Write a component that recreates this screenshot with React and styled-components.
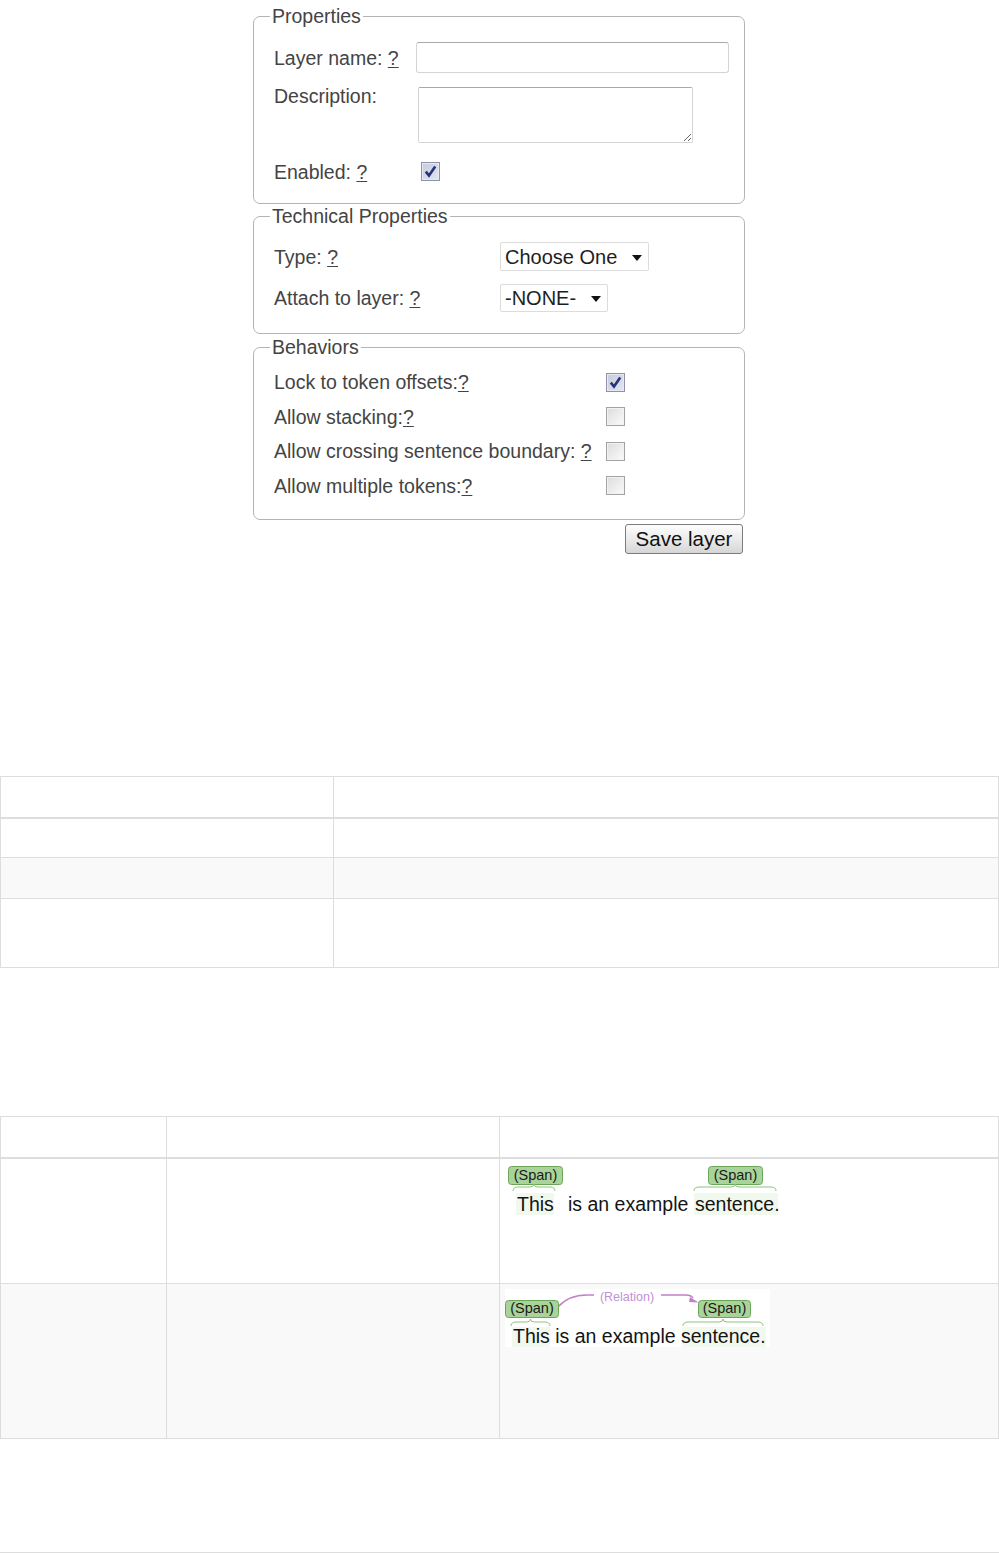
import React from "react";
import styled, { createGlobalStyle } from "styled-components";

const GlobalStyle = createGlobalStyle`
  body {
    margin: 0;
    background: #fff;
    font-family: "Liberation Sans", Arial, sans-serif;
  }
`;

const Page = styled.div`
  display: flex;
  flex-direction: column;
`;

const LayerForm = styled.form`
  width: 492px;
  margin: 5px 0 0 253px;
  display: flex;
  flex-direction: column;
  color: #444;
  font-size: 19.5px;
  line-height: 22px;
`;

const Group = styled.fieldset`
  margin: ${(p) => p.$top || 0}px 0 0;
  padding: ${(p) => p.$pad};
  border: 1px solid #b4b4b4;
  border-radius: 7px;
  min-width: 0;
`;

const Legend = styled.legend`
  padding: 0 2px;
  line-height: 22px;
`;

const Row = styled.div`
  display: grid;
  grid-template-columns: ${(p) => p.$label}px auto;
  align-items: ${(p) => p.$align || "center"};
  justify-items: start;
  margin-top: ${(p) => p.$gap || 0}px;
  padding-left: 4px;
  height: ${(p) => (p.$h ? `${p.$h}px` : "auto")};
`;

const Label = styled.span`
  margin-top: ${(p) => p.$shift || 0}px;
  white-space: nowrap;
`;

const Help = styled.span`
  text-decoration: underline;
  text-underline-offset: 2px;
`;

const TextInput = styled.input`
  box-sizing: border-box;
  width: 313px;
  height: 31px;
  margin: 0;
  border: 1px solid #d4d4d4;
  border-top-color: #aaa;
  border-radius: 3px;
  background: #fff;
`;

const TextArea = styled.textarea`
  box-sizing: border-box;
  width: 275px;
  height: 56px;
  margin: 0 0 0 2px;
  border: 1px solid #d4d4d4;
  border-top-color: #aaa;
  border-radius: 2px;
  background: #fff;
  display: block;
`;

const SelectBox = styled.div`
  box-sizing: border-box;
  display: inline-flex;
  align-items: center;
  gap: 15px;
  height: ${(p) => p.$h}px;
  padding: 0 6px 0 4px;
  border: 1px solid #dcdcdc;
  border-radius: 2px;
  background: #fff;
  color: #1e1e1e;
  font-size: 20px;
`;

const Caret = styled.span`
  width: 0;
  height: 0;
  margin-top: 2px;
  border-left: 5px solid transparent;
  border-right: 5px solid transparent;
  border-top: 6px solid #111;
`;

const Box = styled.span`
  box-sizing: border-box;
  display: inline-flex;
  align-items: center;
  justify-content: center;
  width: 19px;
  height: 19px;
  margin-left: ${(p) => p.$indent || 0}px;
  border: 1px solid ${(p) => (p.$checked ? "#8e94a6" : "#a3a3a3")};
  box-shadow: inset 0 0 0 1px ${(p) => (p.$checked ? "#e7e9f2" : "#f2f2f2")};
  background: ${(p) =>
    p.$checked
      ? "linear-gradient(135deg, #c6cbde, #e2e5f0)"
      : "linear-gradient(135deg, #dcdcdc, #fbfbfb)"};
`;

const ButtonBar = styled.div`
  display: flex;
  justify-content: flex-end;
  margin-top: 4px;
  padding-right: 2px;
`;

const SaveButton = styled.button`
  box-sizing: border-box;
  width: 118px;
  height: 30px;
  padding: 0;
  border: 1px solid #7b7b7b;
  border-radius: 3px;
  background: linear-gradient(#fdfdfd, #e9e9e9 55%, #d6d6d6);
  color: #111;
  font-family: "Liberation Sans", Arial, sans-serif;
  font-size: 20.5px;
`;

const DataTable = styled.table`
  width: 100%;
  border-collapse: collapse;
  table-layout: fixed;
  margin-top: ${(p) => p.$top}px;

  th,
  td {
    border: 1px solid #ddd;
    padding: 5px;
    vertical-align: top;
  }

  thead th {
    border-bottom: 2px solid #ddd;
  }

  tbody tr:nth-child(even) {
    background: #f9f9f9;
  }
`;

const Col = styled.col`
  width: ${(p) => p.$w};
`;

const Tr = styled.tr`
  height: ${(p) => p.$h}px;
`;

const Figure = styled.svg`
  display: block;
  font-family: "Liberation Sans", Arial, sans-serif;
`;

const Rule = styled.div`
  margin-top: 113px;
  border-top: 1px solid #ddd;
`;

const Checkbox = ({ checked, indent }) => (
  <Box $checked={checked} $indent={indent}>
    {checked && (
      <svg width="15" height="15" viewBox="0 0 15 15">
        <path d="M2.8 7.6 L6 11.6 L12.2 2.6" fill="none" stroke="#26357a" strokeWidth="2.6" />
      </svg>
    )}
  </Box>
);

const brace = (x1, x2, y) => {
  const m = (x1 + x2) / 2;
  return `M${x1},${y + 4} Q${x1},${y} ${x1 + 5},${y} L${m - 4},${y} Q${m},${y} ${m},${y - 3} Q${m},${y} ${m + 4},${y} L${x2 - 5},${y} Q${x2},${y} ${x2},${y + 4}`;
};

const SpanTag = ({ x, y, w, h }) => (
  <g>
    <rect x={x + 0.5} y={y + 0.5} width={w} height={h} rx="3" fill="#a9d398" stroke="#6aa659" />
    <text x={x + w / 2 + 0.5} y={y + h - 4} fontSize="14.5" fill="#1a1a1a" textAnchor="middle">
      (Span)
    </text>
  </g>
);

const SpanExample = () => (
  <Figure width="280" height="56">
    <rect x="11" y="29" width="38" height="22" fill="#f1f8ee" />
    <rect x="189" y="29" width="84" height="22" fill="#f1f8ee" />
    <SpanTag x={3} y={2} w={54} h={18} />
    <SpanTag x={203} y={2} w={54} h={18} />
    <path d={brace(8, 50, 23)} fill="none" stroke="#8cc47a" />
    <path d={brace(189, 271, 23)} fill="none" stroke="#8cc47a" />
    <g fontSize="19.5" fill="#141414">
      <text x="12" y="47">This</text>
      <text x="63" y="47">is an example</text>
      <text x="190" y="47">sentence.</text>
    </g>
  </Figure>
);

const RelationExample = () => (
  <Figure width="265" height="58">
    <rect width="265" height="58" fill="#fff" />
    <rect x="7" y="38" width="38" height="20" fill="#f1f8ee" />
    <rect x="177" y="38" width="84" height="20" fill="#f1f8ee" />
    <path d="M53,18 C60,10 70,6 82,6 L89,6" fill="none" stroke="#c47fcb" strokeWidth="1.3" />
    <text x="122" y="11.5" fontSize="12.5" fill="#c192d2" textAnchor="middle">
      (Relation)
    </text>
    <path d="M156,6 L181,6 Q186,6 188,9" fill="none" stroke="#c47fcb" strokeWidth="1.3" />
    <polygon points="185,8 193.5,13.5 184,13" fill="#c47fcb" />
    <SpanTag x={0} y={11} w={53} h={17} />
    <SpanTag x={193} y={11} w={52} h={17} />
    <path d={brace(6, 45, 33)} fill="none" stroke="#8cc47a" />
    <path d={brace(178, 258, 33)} fill="none" stroke="#8cc47a" />
    <text x="8" y="54" fontSize="19.5" fill="#141414">
      This is an example sentence.
    </text>
  </Figure>
);

const behaviors = [
  { text: "Lock to token offsets:", space: false, checked: true },
  { text: "Allow stacking:", space: false, checked: false },
  { text: "Allow crossing sentence boundary:", space: true, checked: false },
  { text: "Allow multiple tokens:", space: false, checked: false },
];

export default function App() {
  return (
    <Page>
      <GlobalStyle />
      <LayerForm onSubmit={(e) => e.preventDefault()}>
        <Group $pad="15px 16px 20.5px">
          <Legend>Properties</Legend>
          <Row $label={142} $h={31}>
            <Label>
              Layer name: <Help>?</Help>
            </Label>
            <TextInput type="text" />
          </Row>
          <Row $label={142} $gap={14} $align="start">
            <Label $shift={-2}>Description:</Label>
            <TextArea />
          </Row>
          <Row $label={142} $gap={17.5} $h={22}>
            <Label>
              Enabled: <Help>?</Help>
            </Label>
            <Checkbox checked indent={5} />
          </Row>
        </Group>

        <Group $top={1} $pad="15px 16px 21px">
          <Legend>Technical Properties</Legend>
          <Row $label={226} $h={29}>
            <Label>
              Type: <Help>?</Help>
            </Label>
            <SelectBox $h={29}>
              Choose One <Caret />
            </SelectBox>
          </Row>
          <Row $label={226} $gap={13} $h={28}>
            <Label>
              Attach to layer: <Help>?</Help>
            </Label>
            <SelectBox $h={28}>
              -NONE- <Caret />
            </SelectBox>
          </Row>
        </Group>

        <Group $top={2} $pad="7px 16px 16px">
          <Legend>Behaviors</Legend>
          {behaviors.map((b) => (
            <Row key={b.text} $label={332} $h={34.5}>
              <Label>
                {b.text}
                {b.space ? " " : ""}
                <Help>?</Help>
              </Label>
              <Checkbox checked={b.checked} />
            </Row>
          ))}
        </Group>

        <ButtonBar>
          <SaveButton type="submit">Save layer</SaveButton>
        </ButtonBar>
      </LayerForm>

      <DataTable $top={222}>
        <colgroup>
          <Col $w="33.33%" />
          <Col $w="66.67%" />
        </colgroup>
        <thead>
          <Tr $h={41}>
            <th />
            <th />
          </Tr>
        </thead>
        <tbody>
          <Tr $h={40}>
            <td />
            <td />
          </Tr>
          <Tr $h={41}>
            <td />
            <td />
          </Tr>
          <Tr $h={69}>
            <td />
            <td />
          </Tr>
        </tbody>
      </DataTable>

      <DataTable $top={148}>
        <colgroup>
          <Col $w="16.67%" />
          <Col $w="33.33%" />
          <Col $w="50%" />
        </colgroup>
        <thead>
          <Tr $h={41}>
            <th />
            <th />
            <th />
          </Tr>
        </thead>
        <tbody>
          <Tr $h={126}>
            <td />
            <td />
            <td>
              <SpanExample />
            </td>
          </Tr>
          <Tr $h={155}>
            <td />
            <td />
            <td>
              <RelationExample />
            </td>
          </Tr>
        </tbody>
      </DataTable>

      <Rule />
    </Page>
  );
}
